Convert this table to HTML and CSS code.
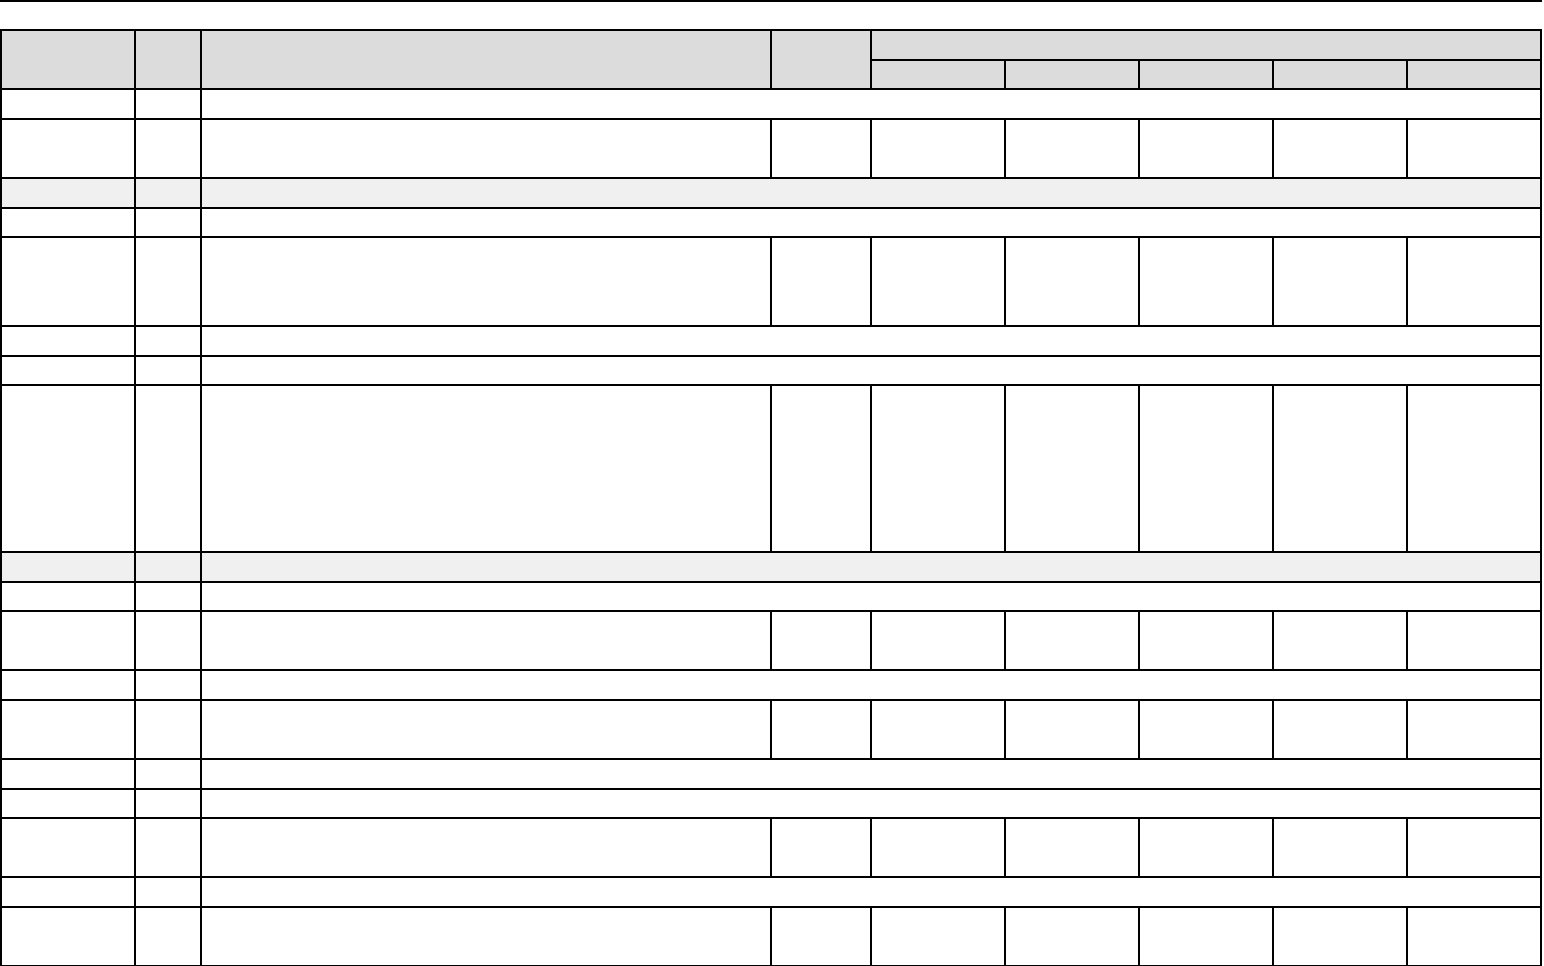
FILE: index.html
```html
<!DOCTYPE html>
<html lang="en">
<head>
<meta charset="utf-8">
<title>Table</title>
<link rel="stylesheet" href="styles.css">
</head>
<body>
<div class="page">
  <div class="rule"></div>
  <div class="sheet" role="table">
    <div class="cell head tall" role="columnheader"></div>
    <div class="cell head tall" role="columnheader"></div>
    <div class="cell head tall" role="columnheader"></div>
    <div class="cell head tall" role="columnheader"></div>
    <div class="cell head group" role="columnheader"></div>
    <div class="cell head" role="columnheader"></div>
    <div class="cell head" role="columnheader"></div>
    <div class="cell head" role="columnheader"></div>
    <div class="cell head" role="columnheader"></div>
    <div class="cell head" role="columnheader"></div>

    <!-- row 3: span -->
    <div class="cell"></div><div class="cell"></div><div class="cell wide"></div>
    <!-- row 4: full -->
    <div class="cell"></div><div class="cell"></div><div class="cell"></div><div class="cell"></div><div class="cell"></div><div class="cell"></div><div class="cell"></div><div class="cell"></div><div class="cell"></div>
    <!-- row 5: section -->
    <div class="cell section"></div><div class="cell section"></div><div class="cell section wide"></div>
    <!-- row 6 -->
    <div class="cell"></div><div class="cell"></div><div class="cell wide"></div>
    <!-- row 7 full -->
    <div class="cell"></div><div class="cell"></div><div class="cell"></div><div class="cell"></div><div class="cell"></div><div class="cell"></div><div class="cell"></div><div class="cell"></div><div class="cell"></div>
    <!-- row 8 -->
    <div class="cell"></div><div class="cell"></div><div class="cell wide"></div>
    <!-- row 9 -->
    <div class="cell"></div><div class="cell"></div><div class="cell wide"></div>
    <!-- row 10 full -->
    <div class="cell"></div><div class="cell"></div><div class="cell"></div><div class="cell"></div><div class="cell"></div><div class="cell"></div><div class="cell"></div><div class="cell"></div><div class="cell"></div>
    <!-- row 11 section -->
    <div class="cell section"></div><div class="cell section"></div><div class="cell section wide"></div>
    <!-- row 12 -->
    <div class="cell"></div><div class="cell"></div><div class="cell wide"></div>
    <!-- row 13 full -->
    <div class="cell"></div><div class="cell"></div><div class="cell"></div><div class="cell"></div><div class="cell"></div><div class="cell"></div><div class="cell"></div><div class="cell"></div><div class="cell"></div>
    <!-- row 14 -->
    <div class="cell"></div><div class="cell"></div><div class="cell wide"></div>
    <!-- row 15 full -->
    <div class="cell"></div><div class="cell"></div><div class="cell"></div><div class="cell"></div><div class="cell"></div><div class="cell"></div><div class="cell"></div><div class="cell"></div><div class="cell"></div>
    <!-- row 16 -->
    <div class="cell"></div><div class="cell"></div><div class="cell wide"></div>
    <!-- row 17 -->
    <div class="cell"></div><div class="cell"></div><div class="cell wide"></div>
    <!-- row 18 full -->
    <div class="cell"></div><div class="cell"></div><div class="cell"></div><div class="cell"></div><div class="cell"></div><div class="cell"></div><div class="cell"></div><div class="cell"></div><div class="cell"></div>
    <!-- row 19 -->
    <div class="cell"></div><div class="cell"></div><div class="cell wide"></div>
    <!-- row 20 full -->
    <div class="cell"></div><div class="cell"></div><div class="cell"></div><div class="cell"></div><div class="cell"></div><div class="cell"></div><div class="cell"></div><div class="cell"></div><div class="cell"></div>
  </div>
</div>
</body>
</html>
```

FILE: styles.css
```css
html, body {
  margin: 0;
  padding: 0;
  background: #ffffff;
  font-family: "Liberation Sans", Arial, sans-serif;
  font-size: 14px;
}

.page {
  width: 1544px;
}

.rule {
  width: 1542px;
  height: 2px;
  background: #000000;
}

.sheet {
  margin-top: 27px;
  box-sizing: border-box;
  width: 1542px;
  padding: 2px;
  gap: 2px;
  background: #000000;
  display: grid;
  grid-template-columns: 132px 64px 568px 98px repeat(5, 132px);
  grid-template-rows:
    28px 27px
    28px 57px 28px 27px 87px 28px 27px 165px
    28px 27px 57px 28px 57px 28px 27px 57px 28px 57px;
}

.cell {
  background: #ffffff;
}

.head {
  background: #dcdcdc;
}

.tall {
  grid-row: span 2;
}

.group {
  grid-column: span 5;
}

.wide {
  grid-column: span 7;
}

.section {
  background: #f0f0f0;
}
```
